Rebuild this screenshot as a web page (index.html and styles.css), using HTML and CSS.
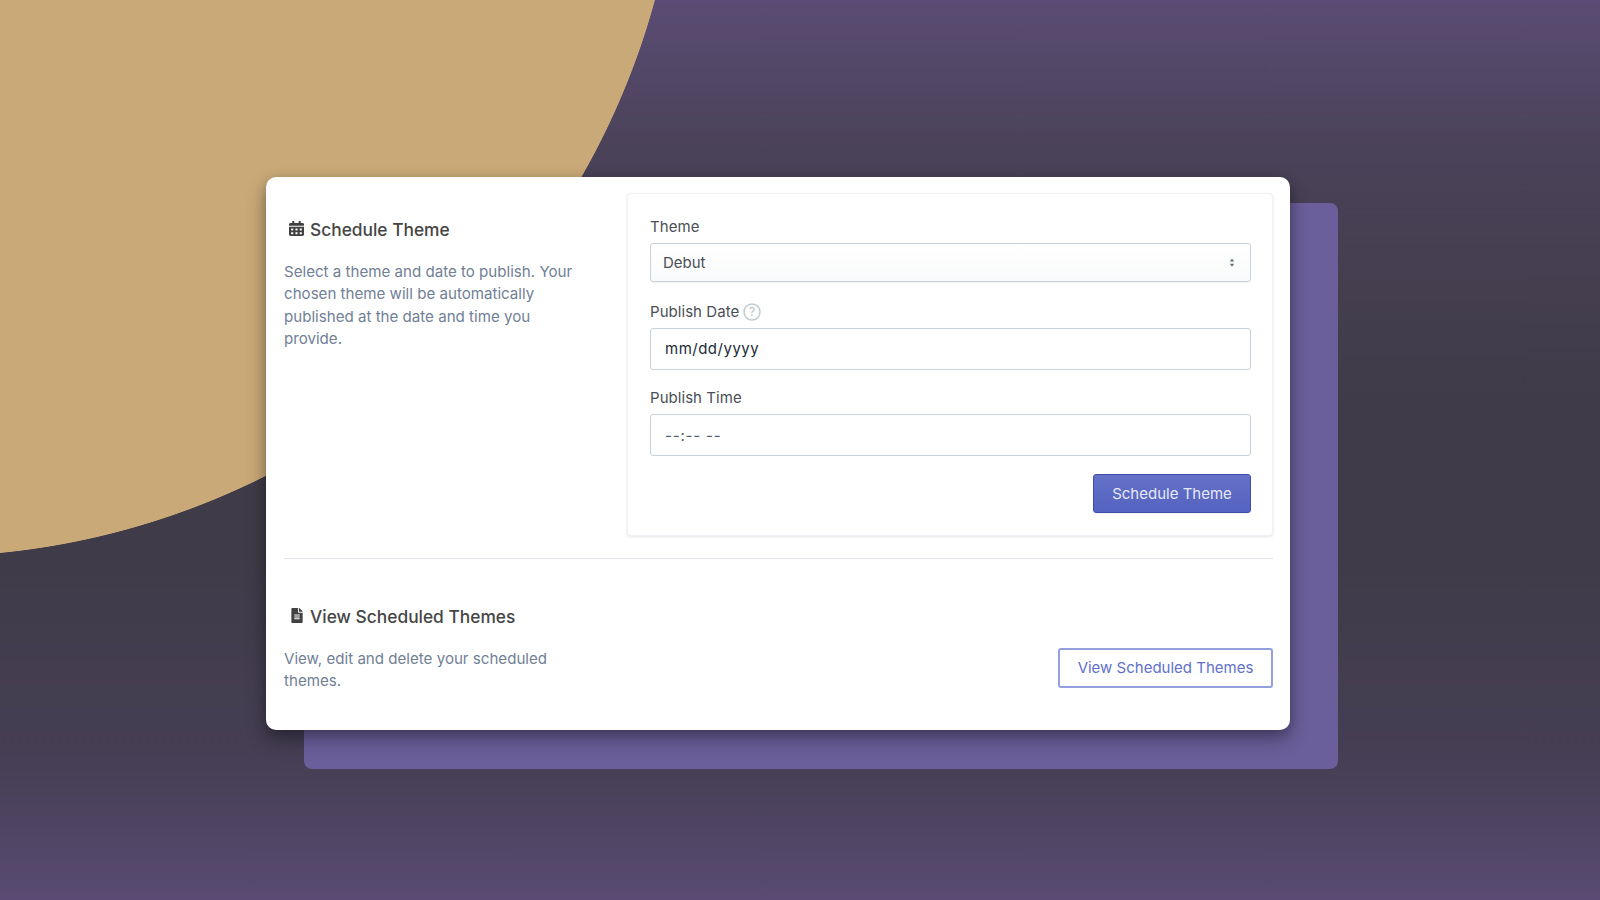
FILE: index.html
```html
<!DOCTYPE html>
<html lang="en">
<head>
<meta charset="utf-8">
<title>Schedule Theme</title>
<link rel="stylesheet" href="styles.css">
</head>
<body>
<main class="stage">
  <div class="stack">
    <div class="backplate"></div>
    <section class="card">
      <div class="row">
        <div class="intro">
          <h2 class="heading">
            <svg class="icon icon-cal" viewBox="0 0 448 512" preserveAspectRatio="none"><path d="M0 464c0 26.5 21.5 48 48 48h352c26.5 0 48-21.5 48-48V192H0v272zm320-196c0-6.6 5.4-12 12-12h40c6.6 0 12 5.4 12 12v40c0 6.6-5.4 12-12 12h-40c-6.6 0-12-5.4-12-12v-40zm0 128c0-6.6 5.4-12 12-12h40c6.6 0 12 5.4 12 12v40c0 6.6-5.4 12-12 12h-40c-6.6 0-12-5.4-12-12v-40zM192 268c0-6.6 5.4-12 12-12h40c6.6 0 12 5.4 12 12v40c0 6.6-5.4 12-12 12h-40c-6.6 0-12-5.4-12-12v-40zm0 128c0-6.6 5.4-12 12-12h40c6.6 0 12 5.4 12 12v40c0 6.6-5.4 12-12 12h-40c-6.6 0-12-5.4-12-12v-40zM64 268c0-6.6 5.4-12 12-12h40c6.6 0 12 5.4 12 12v40c0 6.6-5.4 12-12 12H76c-6.6 0-12-5.4-12-12v-40zm0 128c0-6.6 5.4-12 12-12h40c6.6 0 12 5.4 12 12v40c0 6.6-5.4 12-12 12H76c-6.6 0-12-5.4-12-12v-40zM400 64h-48V16c0-8.8-7.2-16-16-16h-32c-8.8 0-16 7.2-16 16v48H160V16c0-8.8-7.2-16-16-16h-32c-8.8 0-16 7.2-16 16v48H48C21.5 64 0 85.5 0 112v48h448v-48c0-26.5-21.5-48-48-48z"/></svg>
            Schedule Theme
          </h2>
          <p class="copy">Select a theme and date to publish. Your chosen theme will be automatically published at the date and time you provide.</p>
        </div>
        <form class="panel">
          <div class="label">Theme</div>
          <div class="control select">
            <span>Debut</span>
            <svg class="arrows" viewBox="0 0 8 12"><path d="M4 0.5 7 4.5H1zM4 11.5 1 7.5H7z"/></svg>
          </div>
          <div class="label">Publish Date
            <svg class="help" viewBox="0 0 18 18"><circle cx="9" cy="9" r="8"/><text x="9" y="13" text-anchor="middle">?</text></svg>
          </div>
          <div class="control field">mm/dd/yyyy</div>
          <div class="label">Publish Time</div>
          <div class="control field field-time">--:-- --</div>
          <div class="actions">
            <button class="btn btn-primary" type="button">Schedule Theme</button>
          </div>
        </form>
      </div>
      <hr class="rule">
      <div class="row row-bottom">
        <div class="intro">
          <h2 class="heading">
            <svg class="icon icon-file" viewBox="0 0 384 512"><path d="M224 136V0H24C10.7 0 0 10.7 0 24v464c0 13.3 10.7 24 24 24h336c13.3 0 24-10.7 24-24V160H248c-13.2 0-24-10.8-24-24zm64 236c0 6.6-5.4 12-12 12H108c-6.6 0-12-5.4-12-12v-8c0-6.6 5.4-12 12-12h168c6.6 0 12 5.4 12 12v8zm0-64c0 6.6-5.4 12-12 12H108c-6.6 0-12-5.4-12-12v-8c0-6.6 5.4-12 12-12h168c6.6 0 12 5.4 12 12v8zm0-72v8c0 6.6-5.4 12-12 12H108c-6.6 0-12-5.4-12-12v-8c0-6.6 5.4-12 12-12h168c6.6 0 12 5.4 12 12zm96-114.1v6.1H256V0h6.1c6.4 0 12.5 2.5 17 7l97.9 98c4.5 4.5 7 10.6 7 16.9z"/></svg>
            View Scheduled Themes
          </h2>
          <p class="copy">View, edit and delete your scheduled themes.</p>
        </div>
        <button class="btn btn-outline" type="button">View Scheduled Themes</button>
      </div>
    </section>
  </div>
</main>
</body>
</html>
```
FILE: styles.css
```css
* { box-sizing: border-box; }
html, body { margin: 0; height: 100%; }
body {
  font-family: Inter, "Liberation Sans", sans-serif;
  overflow: hidden;
}
.stage {
  width: 1600px;
  height: 900px;
  padding: 177px 0 0 266px;
  background:
    radial-gradient(circle 756px at -74px -199px, #caa978 99.9%, transparent 100%),
    linear-gradient(180deg, #5a4c74 0%, #4a4258 17%, #3f3b48 45%, #3f3b48 62%, #463f55 85%, #594b73 100%);
}
.stack {
  display: grid;
  width: 1072px;
}
.backplate {
  grid-area: 1 / 1;
  margin: 26px 0 0 38px;
  background: #6b5f9b;
  border-radius: 8px;
}
.card {
  grid-area: 1 / 1;
  position: relative;
  width: 1024px;
  height: 553px;
  margin-bottom: 39px;
  padding: 16px 17px 0 18px;
  background: #fff;
  border-radius: 10px;
  box-shadow: 0 10px 20px rgba(0, 0, 0, .3), 0 3px 12px rgba(0, 0, 0, .2);
}
.row {
  display: flex;
  justify-content: space-between;
}
.row-bottom {
  align-items: flex-end;
}
.intro {
  width: 300px;
  padding-top: 25px;
}
.heading {
  display: flex;
  align-items: center;
  height: 24px;
  margin: 0 0 19px;
  padding-left: 5px;
  color: #454545;
  font-size: 17.35px;
  font-weight: 500;
  line-height: 24px;
}
.icon {
  flex: none;
  margin-right: 6px;
  fill: #414141;
}
.icon-cal { width: 15px; height: 15px; margin-top: -3px; }
.icon-file { width: 12px; height: 15px; margin: -3px 7px 0 2px; }
.copy {
  margin: 0;
  color: #718096;
  font-size: 15.12px;
  line-height: 22.4px;
}
.panel {
  width: 646px;
  padding: 22px 21px 22px 22px;
  background: #fff;
  border: 1px solid #eff1f4;
  border-radius: 4px;
  box-shadow: 0 1px 3px rgba(63, 63, 68, .12);
}
.label {
  display: flex;
  align-items: center;
  height: 22px;
  margin-bottom: 5px;
  color: #4a4f55;
  font-size: 15px;
  line-height: 22px;
  letter-spacing: .05px;
}
.help {
  width: 18px;
  height: 18px;
  margin-left: 4px;
  fill: none;
}
.help circle { stroke: #c0cad3; stroke-width: 1.5; }
.help text { fill: #b4bfc9; stroke: none; font-size: 12px; font-family: Inter, sans-serif; }
.control {
  display: flex;
  align-items: center;
  border: 1px solid #c9d1da;
  border-radius: 3px;
  color: #212b36;
  font-size: 15px;
}
.select {
  justify-content: space-between;
  height: 39px;
  margin-bottom: 19px;
  padding: 0 15px 0 12px;
  color: #4a4f55;
  background: linear-gradient(180deg, #fff, #f9fafb);
  box-shadow: 0 1px 0 rgba(22, 29, 37, .05);
}
.arrows { width: 6px; height: 11px; fill: #637381; }
.field {
  height: 41.5px;
  margin-bottom: 17.5px;
  padding: 0 14px;
  background: #fff;
  letter-spacing: .5px;
}
.field-time {
  height: 42px;
  margin-bottom: 0;
  color: #4f5a65;
  letter-spacing: .8px;
}
.actions {
  display: flex;
  justify-content: flex-end;
  margin-top: 18px;
}
.btn {
  height: 39px;
  border-radius: 3px;
  font-family: inherit;
  font-size: 15px;
  white-space: nowrap;
}
.btn-primary {
  width: 158px;
  padding: 0;
  color: #e6e8f7;
  background: linear-gradient(180deg, #6371c7, #5563c1);
  border: 1px solid #3f4eae;
  box-shadow: 0 1px 0 rgba(22, 29, 37, .05);
}
.btn-outline {
  width: 215px;
  height: 40px;
  margin-bottom: 5px;
  padding: 0;
  color: #6170cb;
  background: #fff;
  border: 2px solid #949fe0;
}
.rule {
  height: 1px;
  margin: 22px 0 36px;
  background: #e3e8ee;
  border: 0;
}
.row-bottom .intro { padding-top: 0; margin-top: 10px; }
```
